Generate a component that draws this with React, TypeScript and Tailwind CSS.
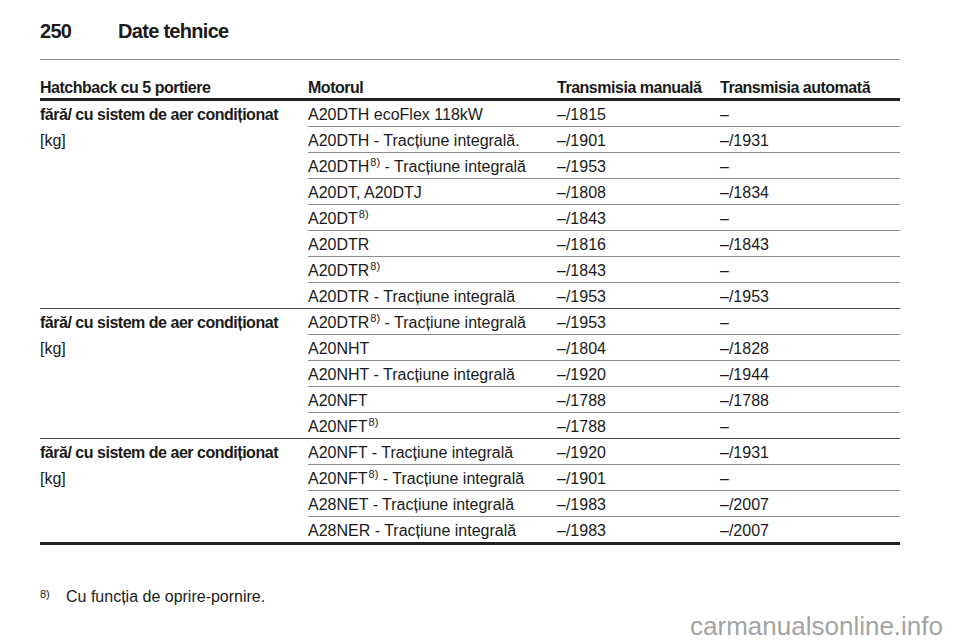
import React from 'react';

type Row = { motor: string; sup?: boolean; rest?: string; manual: string; auto: string };

const groups: Row[][] = [
  [
    { motor: 'A20DTH ecoFlex 118kW', manual: '–/1815', auto: '–' },
    { motor: 'A20DTH - Tracțiune integrală.', manual: '–/1901', auto: '–/1931' },
    { motor: 'A20DTH', sup: true, rest: ' - Tracțiune integrală', manual: '–/1953', auto: '–' },
    { motor: 'A20DT, A20DTJ', manual: '–/1808', auto: '–/1834' },
    { motor: 'A20DT', sup: true, manual: '–/1843', auto: '–' },
    { motor: 'A20DTR', manual: '–/1816', auto: '–/1843' },
    { motor: 'A20DTR', sup: true, manual: '–/1843', auto: '–' },
    { motor: 'A20DTR - Tracțiune integrală', manual: '–/1953', auto: '–/1953' },
  ],
  [
    { motor: 'A20DTR', sup: true, rest: ' - Tracțiune integrală', manual: '–/1953', auto: '–' },
    { motor: 'A20NHT', manual: '–/1804', auto: '–/1828' },
    { motor: 'A20NHT - Tracțiune integrală', manual: '–/1920', auto: '–/1944' },
    { motor: 'A20NFT', manual: '–/1788', auto: '–/1788' },
    { motor: 'A20NFT', sup: true, manual: '–/1788', auto: '–' },
  ],
  [
    { motor: 'A20NFT - Tracțiune integrală', manual: '–/1920', auto: '–/1931' },
    { motor: 'A20NFT', sup: true, rest: ' - Tracțiune integrală', manual: '–/1901', auto: '–' },
    { motor: 'A28NET - Tracțiune integrală', manual: '–/1983', auto: '–/2007' },
    { motor: 'A28NER - Tracțiune integrală', manual: '–/1983', auto: '–/2007' },
  ],
];

function Sup() {
  return <sup className="text-[11px] relative top-[-6px] ml-[1px]">8)</sup>;
}

export default function App() {
  return (
    <div
      className="relative w-[960px] h-[642px] bg-white text-[#1a1a1a] pl-[40px] pr-[60px]"
      style={{ fontFamily: '"Liberation Sans", Arial, sans-serif' }}
    >
      <div className="h-[60px] border-b border-[#8c8c8c] pt-[19px] flex text-[20px] leading-[24px] font-bold tracking-[-0.035em]">
        <span className="w-[78px]">250</span>
        <span>Date tehnice</span>
      </div>

      <div className="flex items-end h-[41px] border-b-[3px] border-[#222] text-[16px] leading-[18px] font-bold tracking-[-0.03em] pb-[1px]">
        <div className="w-[268px]">Hatchback cu 5 portiere</div>
        <div className="w-[249px]">Motorul</div>
        <div className="w-[163px]">Transmisia manuală</div>
        <div className="flex-1">Transmisia automată</div>
      </div>

      {groups.map((rows, gi) => (
        <div
          key={gi}
          className={
            gi === groups.length - 1
              ? 'flex border-b-[3px] border-[#222]'
              : 'flex border-b-[1.5px] border-[#444]'
          }
        >
          <div className="w-[268px] pt-[3px] text-[16px] leading-[26px]">
            <div className="font-bold tracking-[-0.03em] leading-[22px]">fără/ cu sistem de aer condiționat</div>
            <div className="mt-[4px] leading-[22px]">[kg]</div>
          </div>
          <div className="flex-1">
            {rows.map((r, i) => (
              <div
                key={i}
                className={
                  i === rows.length - 1
                    ? 'flex h-[25px] pt-[3px] text-[16px] leading-[22px]'
                    : 'flex h-[26px] pt-[3px] text-[16px] leading-[22px] border-b border-[#8c8c8c]'
                }
              >
                <div className="w-[249px] whitespace-nowrap">
                  {r.motor}
                  {r.sup && <Sup />}
                  {r.rest}
                </div>
                <div className="w-[163px]">{r.manual}</div>
                <div className="flex-1">{r.auto}</div>
              </div>
            ))}
          </div>
        </div>
      ))}

      <div className="flex mt-[42px] text-[16px] leading-[20px]">
        <span className="w-[26px] text-[11px] leading-[14px]">8)</span>
        <span>Cu funcția de oprire-pornire.</span>
      </div>

      <div className="absolute right-[17px] bottom-[1px] text-[26px] leading-[30px] text-[#a3a3a3]">
        carmanualsonline.info
      </div>
    </div>
  );
}
